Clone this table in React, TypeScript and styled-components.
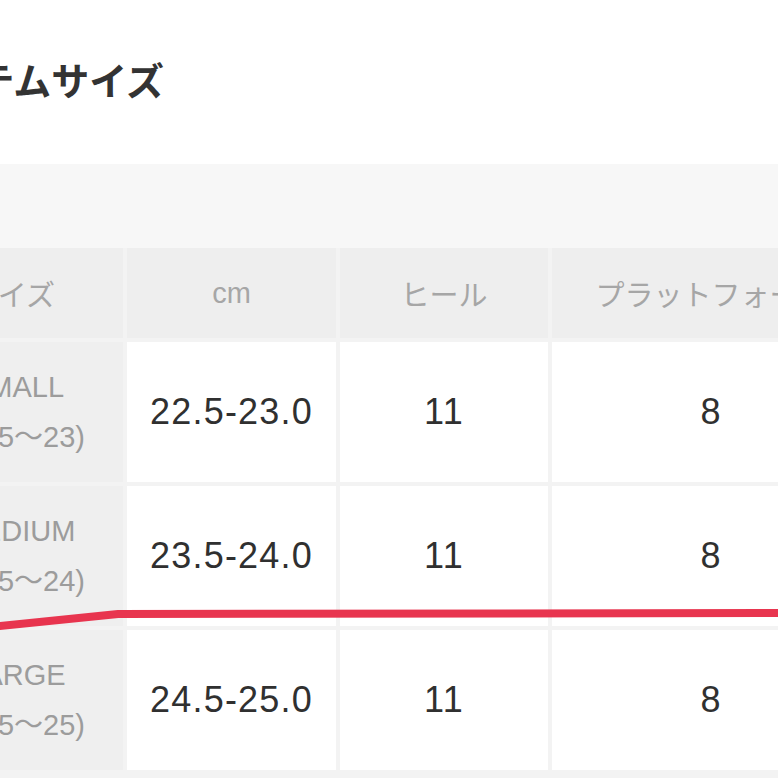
import React from "react";
import styled, { createGlobalStyle } from "styled-components";

const Global = createGlobalStyle`
  html, body { margin: 0; padding: 0; background: #ffffff; }
  body { font-family: "Liberation Sans", "Noto Sans CJK JP", sans-serif; }
`;

const Viewport = styled.div`
  position: relative;
  width: 778px;
  height: 778px;
  overflow: hidden;
  background: #ffffff;
`;

const Title = styled.h2`
  margin: 0 0 0 -97px;
  padding-top: 60px;
  height: 104px;
  font-family: "Noto Sans CJK JP", sans-serif;
  font-weight: 700;
  font-size: 38px;
  line-height: 38px;
  color: #333333;
  white-space: nowrap;
`;

const Band = styled.div`
  height: 84px;
  background: #f7f7f7;
`;

const Table = styled.div`
  display: grid;
  grid-template-columns: 201px 209px 208px 318px;
  grid-template-rows: 90px 140px 140px 140px;
  gap: 4px;
  margin-left: -78px;
  width: 948px;
  padding-bottom: 8px;
  background: #f3f3f3;
`;

const HeadCell = styled.div<{ $align?: "center" | "right"; $padRight?: number }>`
  display: flex;
  align-items: center;
  justify-content: ${(p) => (p.$align === "right" ? "flex-end" : "center")};
  padding-right: ${(p) => p.$padRight ?? 0}px;
  background: #eeeeee;
  font-size: 29px;
  color: #a6a6a6;
  white-space: nowrap;
`;

const LabelCell = styled.div`
  display: flex;
  flex-direction: column;
  align-items: center;
  justify-content: center;
  padding-right: 12px;
  background: #efefef;
  font-size: 29px;
  line-height: 50px;
  color: #9c9c9c;
  white-space: nowrap;
`;

const DataCell = styled.div`
  display: flex;
  align-items: center;
  justify-content: center;
  background: #ffffff;
  font-size: 36px;
  letter-spacing: 1.2px;
  color: #303030;
  white-space: nowrap;
`;

const Annotation = styled.svg`
  position: absolute;
  left: 0;
  top: 0;
  pointer-events: none;
`;

const rows = [
  { name: "SMALL", range: "(22.5〜23)", cm: "22.5-23.0", heel: "11", plat: "8" },
  { name: "MEDIUM", range: "(23.5〜24)", cm: "23.5-24.0", heel: "11", plat: "8" },
  { name: "LARGE", range: "(24.5〜25)", cm: "24.5-25.0", heel: "11", plat: "8" },
];

export default function App() {
  return (
    <>
      <Global />
      <Viewport>
        <Title>アイテムサイズ</Title>
        <Band />
        <Table>
          <HeadCell $align="right" $padRight={68}>サイズ</HeadCell>
          <HeadCell>cm</HeadCell>
          <HeadCell>ヒール</HeadCell>
          <HeadCell>プラットフォーム</HeadCell>
          {rows.map((r) => (
            <React.Fragment key={r.name}>
              <LabelCell>
                <span>{r.name}</span>
                <span>{r.range}</span>
              </LabelCell>
              <DataCell>{r.cm}</DataCell>
              <DataCell>{r.heel}</DataCell>
              <DataCell>{r.plat}</DataCell>
            </React.Fragment>
          ))}
        </Table>
        <Annotation width="778" height="778" viewBox="0 0 778 778">
          <polyline
            points="-10,627 118,614 778,613"
            fill="none"
            stroke="#e8354f"
            strokeWidth="8"
            strokeLinejoin="round"
          />
        </Annotation>
      </Viewport>
    </>
  );
}
